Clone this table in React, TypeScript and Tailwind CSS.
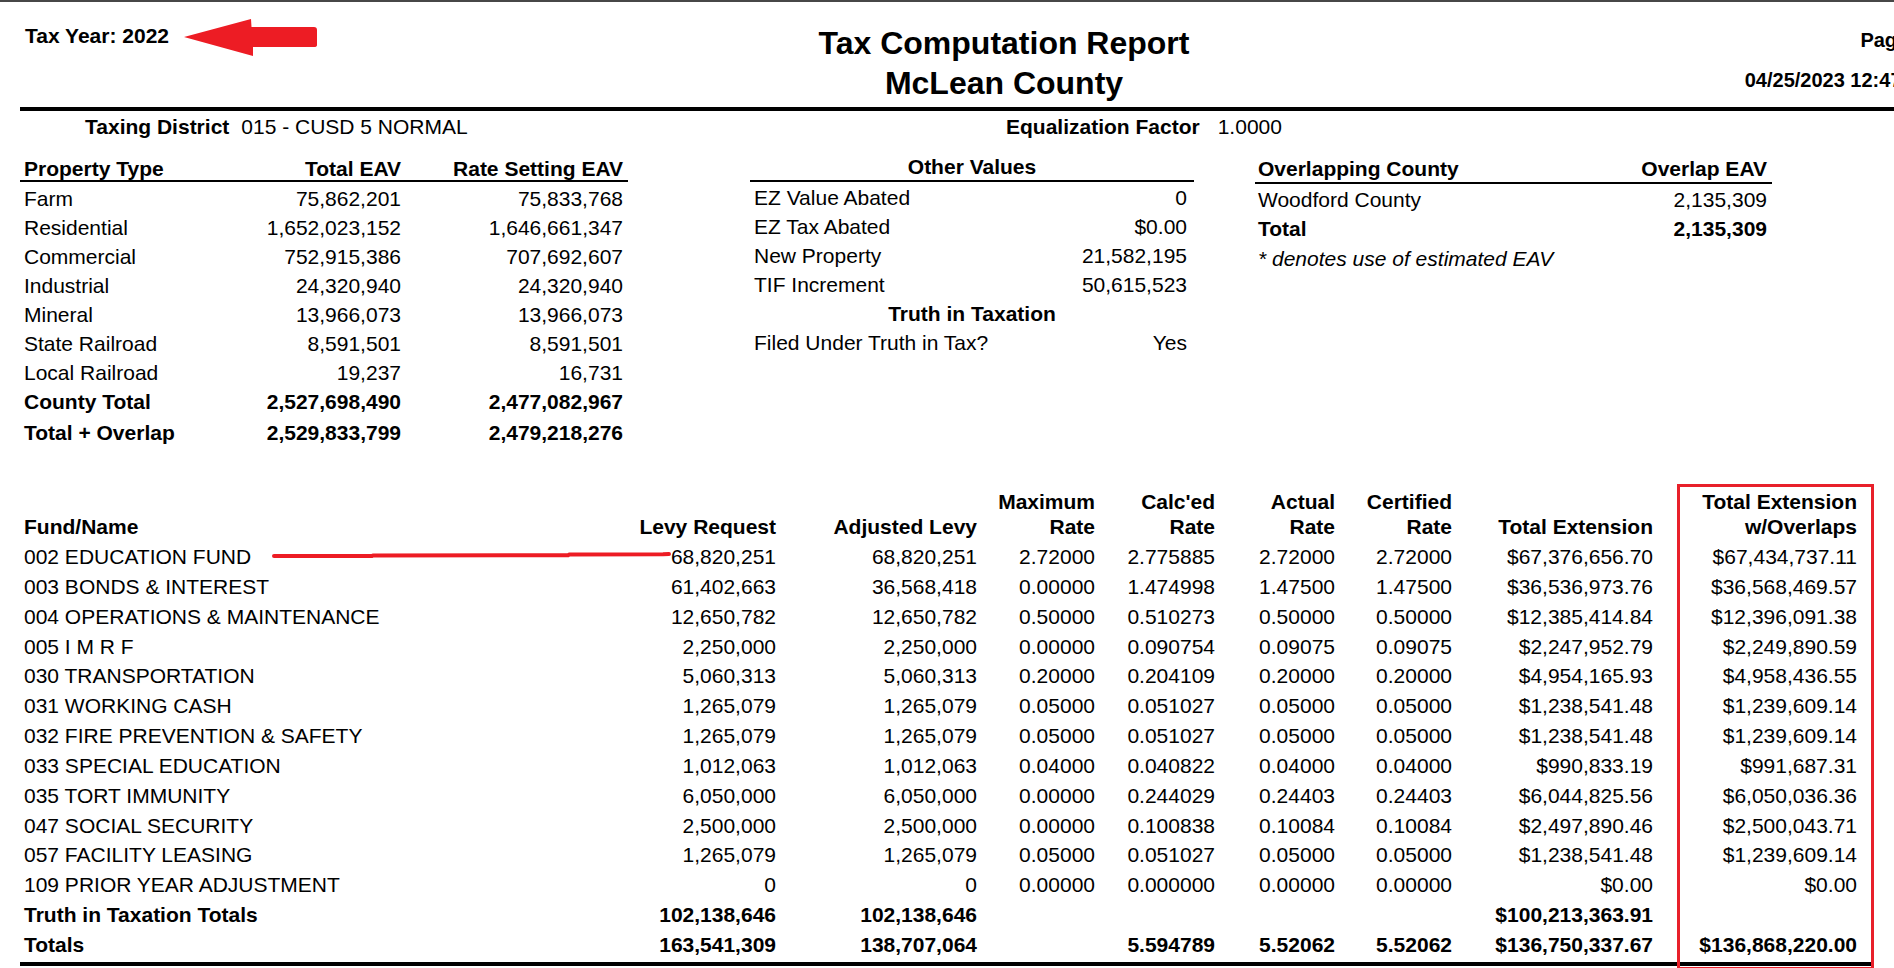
import React from "react";

const FONT = "font-['Liberation_Sans',Arial,Helvetica,sans-serif]";

const propRows: [string, string, string, boolean][] = [
  ["Farm", "75,862,201", "75,833,768", false],
  ["Residential", "1,652,023,152", "1,646,661,347", false],
  ["Commercial", "752,915,386", "707,692,607", false],
  ["Industrial", "24,320,940", "24,320,940", false],
  ["Mineral", "13,966,073", "13,966,073", false],
  ["State Railroad", "8,591,501", "8,591,501", false],
  ["Local Railroad", "19,237", "16,731", false],
  ["County Total", "2,527,698,490", "2,477,082,967", true],
];

const otherRows: [string, string][] = [
  ["EZ Value Abated", "0"],
  ["EZ Tax Abated", "$0.00"],
  ["New Property", "21,582,195"],
  ["TIF Increment", "50,615,523"],
];

type Fund = {
  name: string;
  v: string[];
  bold?: boolean;
};

const funds: Fund[] = [
  { name: "002 EDUCATION FUND", v: ["68,820,251", "68,820,251", "2.72000", "2.775885", "2.72000", "2.72000", "$67,376,656.70", "$67,434,737.11"] },
  { name: "003 BONDS & INTEREST", v: ["61,402,663", "36,568,418", "0.00000", "1.474998", "1.47500", "1.47500", "$36,536,973.76", "$36,568,469.57"] },
  { name: "004 OPERATIONS & MAINTENANCE", v: ["12,650,782", "12,650,782", "0.50000", "0.510273", "0.50000", "0.50000", "$12,385,414.84", "$12,396,091.38"] },
  { name: "005 I M R F", v: ["2,250,000", "2,250,000", "0.00000", "0.090754", "0.09075", "0.09075", "$2,247,952.79", "$2,249,890.59"] },
  { name: "030 TRANSPORTATION", v: ["5,060,313", "5,060,313", "0.20000", "0.204109", "0.20000", "0.20000", "$4,954,165.93", "$4,958,436.55"] },
  { name: "031 WORKING CASH", v: ["1,265,079", "1,265,079", "0.05000", "0.051027", "0.05000", "0.05000", "$1,238,541.48", "$1,239,609.14"] },
  { name: "032 FIRE PREVENTION & SAFETY", v: ["1,265,079", "1,265,079", "0.05000", "0.051027", "0.05000", "0.05000", "$1,238,541.48", "$1,239,609.14"] },
  { name: "033 SPECIAL EDUCATION", v: ["1,012,063", "1,012,063", "0.04000", "0.040822", "0.04000", "0.04000", "$990,833.19", "$991,687.31"] },
  { name: "035 TORT IMMUNITY", v: ["6,050,000", "6,050,000", "0.00000", "0.244029", "0.24403", "0.24403", "$6,044,825.56", "$6,050,036.36"] },
  { name: "047 SOCIAL SECURITY", v: ["2,500,000", "2,500,000", "0.00000", "0.100838", "0.10084", "0.10084", "$2,497,890.46", "$2,500,043.71"] },
  { name: "057 FACILITY LEASING", v: ["1,265,079", "1,265,079", "0.05000", "0.051027", "0.05000", "0.05000", "$1,238,541.48", "$1,239,609.14"] },
  { name: "109 PRIOR YEAR ADJUSTMENT", v: ["0", "0", "0.00000", "0.000000", "0.00000", "0.00000", "$0.00", "$0.00"] },
  { name: "Truth in Taxation Totals", v: ["102,138,646", "102,138,646", "", "", "", "", "$100,213,363.91", ""], bold: true },
  { name: "Totals", v: ["163,541,309", "138,707,064", "", "5.594789", "5.52062", "5.52062", "$136,750,337.67", "$136,868,220.00"], bold: true },
];

const FUND_GRID =
  "grid grid-cols-[600px_156px_201px_118px_120px_120px_117px_201px_204px_17px]";

function HeadCell({ top, bottom }: { top?: string; bottom: string }) {
  return (
    <div className="flex flex-col justify-end items-end text-right whitespace-nowrap">
      {top ? <div className="leading-[25px]">{top}</div> : null}
      <div className="leading-[25px]">{bottom}</div>
    </div>
  );
}

export default function App() {
  return (
    <div className={`${FONT} relative w-[1894px] h-[968px] overflow-hidden bg-white text-black`}>
      <div className="h-[2px] bg-[#474747]" />
      <div className="w-[2008px] px-[20px]">
        {/* Header */}
        <div className="grid grid-cols-[1fr_auto_1fr] pb-[4px]">
          <div className="pt-[22px] pl-[5px]">
            <div className="text-[21px] font-bold leading-[24px] whitespace-nowrap">Tax Year: 2022</div>
          </div>
          <div className="pt-[21px] text-center font-bold text-[32px] leading-[40px] whitespace-nowrap">
            <div>Tax Computation Report</div>
            <div>McLean County</div>
          </div>
          <div className="pt-[26px] pr-[22px] flex flex-col items-end font-bold text-[20px] whitespace-nowrap">
            <div className="leading-[24px]">Page 1 of 1</div>
            <div className="leading-[24px] mt-[16px]">04/25/2023 12:47:32 PM</div>
          </div>
        </div>
        <div className="h-[4px] bg-black" />

        {/* Taxing district row */}
        <div className="grid grid-cols-[986px_1fr] h-[26px] items-center text-[21px] whitespace-nowrap">
          <div className="pl-[65px]">
            <span className="font-bold">Taxing District</span>
            <span className="ml-[12px]">015 - CUSD 5 NORMAL</span>
          </div>
          <div>
            <span className="font-bold">Equalization Factor</span>
            <span className="ml-[18px]">1.0000</span>
          </div>
        </div>

        {/* Sections */}
        <div className="flex mt-[16px] text-[21px] whitespace-nowrap">
          {/* Property table */}
          <div className="w-[608px] shrink-0">
            <div className="grid grid-cols-[240px_141px_1fr] h-[27px] items-center font-bold">
              <div className="pl-[4px]">Property Type</div>
              <div className="text-right">Total EAV</div>
              <div className="text-right pr-[5px]">Rate Setting EAV</div>
            </div>
            <div className="h-[2px] bg-black" />
            <div className="h-[1px]" />
            {propRows.map(([a, b, c, bold]) => (
              <div
                key={a}
                className={`grid grid-cols-[240px_141px_1fr] h-[29px] items-center ${bold ? "font-bold" : ""}`}
              >
                <div className="pl-[4px]">{a}</div>
                <div className="text-right">{b}</div>
                <div className="text-right pr-[5px]">{c}</div>
              </div>
            ))}
            <div className="grid grid-cols-[240px_141px_1fr] h-[29px] mt-[2px] items-center font-bold">
              <div className="pl-[4px]">Total + Overlap</div>
              <div className="text-right">2,529,833,799</div>
              <div className="text-right pr-[5px]">2,479,218,276</div>
            </div>
          </div>

          {/* Other values */}
          <div className="w-[444px] shrink-0 ml-[122px]">
            <div className="h-[27px] flex items-center justify-center font-bold">Other Values</div>
            <div className="h-[2px] bg-black" />
            <div className="h-[1px]" />
            {otherRows.map(([a, b]) => (
              <div key={a} className="flex justify-between h-[29px] items-center">
                <div className="pl-[4px]">{a}</div>
                <div className="pr-[7px]">{b}</div>
              </div>
            ))}
            <div className="h-[29px] flex items-center justify-center font-bold">Truth in Taxation</div>
            <div className="flex justify-between h-[29px] items-center">
              <div className="pl-[4px]">Filed Under Truth in Tax?</div>
              <div className="pr-[7px]">Yes</div>
            </div>
          </div>

          {/* Overlapping */}
          <div className="w-[517px] shrink-0 ml-[61px] mt-[2px]">
            <div className="h-[27px] flex items-center justify-between font-bold">
              <div className="pl-[3px]">Overlapping County</div>
              <div className="pr-[5px]">Overlap EAV</div>
            </div>
            <div className="h-[2px] bg-black" />
            <div className="h-[1px]" />
            <div className="flex justify-between h-[29px] items-center">
              <div className="pl-[3px]">Woodford County</div>
              <div className="pr-[5px]">2,135,309</div>
            </div>
            <div className="flex justify-between h-[29px] items-center font-bold">
              <div className="pl-[3px]">Total</div>
              <div className="pr-[5px]">2,135,309</div>
            </div>
            <div className="h-[31px] flex items-center pl-[3px] italic">* denotes use of estimated EAV</div>
          </div>
        </div>

        {/* Fund table */}
        <div className="w-[1854px] mt-[43px] text-[21px] whitespace-nowrap">
          <div className={`${FUND_GRID} h-[50px] font-bold`}>
            <div className="flex items-end pl-[4px] leading-[25px]">Fund/Name</div>
            <HeadCell bottom="Levy Request" />
            <HeadCell bottom="Adjusted Levy" />
            <HeadCell top="Maximum" bottom="Rate" />
            <HeadCell top="Calc'ed" bottom="Rate" />
            <HeadCell top="Actual" bottom="Rate" />
            <HeadCell top="Certified" bottom="Rate" />
            <HeadCell bottom="Total Extension" />
            <HeadCell top="Total Extension" bottom="w/Overlaps" />
            <div />
          </div>
          <div className="h-[2px]" />
          {funds.map((f) => (
            <div
              key={f.name}
              className={`${FUND_GRID} h-[29.85px] items-center ${f.bold ? "font-bold" : ""}`}
            >
              <div className="pl-[4px]">{f.name}</div>
              {f.v.map((x, i) => (
                <div key={i} className="text-right">
                  {x}
                </div>
              ))}
              <div />
            </div>
          ))}
          <div className="h-[4px] mt-[3px] bg-black" />
        </div>
      </div>

      {/* Annotations */}
      <svg
        className="absolute left-[180px] top-[16px]"
        width="142"
        height="44"
        viewBox="0 0 142 44"
      >
        <path
          d="M4 21 L71 3 L71.5 11 L134 11 Q137 11 137 14 L137 29 Q137 31 134 31 L73 31 L73 40 Z"
          fill="#ed1c24"
        />
      </svg>
      <svg
        className="absolute left-[268px] top-[548px]"
        width="410"
        height="14"
        viewBox="0 0 410 14"
      >
        <polyline
          points="6,8 104,8 105,7.4 300,7.3 301,6.6 395,6.3 401,6"
          fill="none"
          stroke="#ed1c24"
          strokeWidth="4"
          strokeLinecap="round"
          strokeLinejoin="round"
        />
      </svg>
      <div className="absolute left-[1677px] top-[484px] w-[197px] h-[486px] border-[3px] border-[#e8202a]" />
    </div>
  );
}
